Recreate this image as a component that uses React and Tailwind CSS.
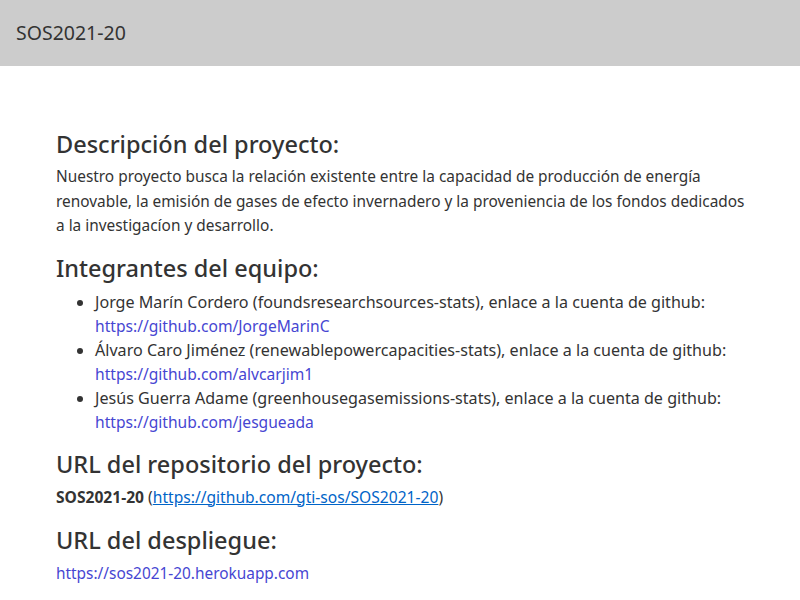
import React from 'react';

// Integrantes del equipo, con su microservicio y cuenta de github
const members = [
  { name: 'Jorge Marín Cordero', api: 'foundsresearchsources-stats', url: 'https://github.com/JorgeMarinC' },
  { name: 'Álvaro Caro Jiménez', api: 'renewablepowercapacities-stats', url: 'https://github.com/alvcarjim1' },
  { name: 'Jesús Guerra Adame', api: 'greenhousegasemissions-stats', url: 'https://github.com/jesgueada' },
];

export default function App() {
  return (
    <div className="min-h-screen bg-white text-[#333] font-['Noto_Sans','Open_Sans',sans-serif]">
      <header className="flex h-[66px] items-center bg-[#cccccc] px-4">
        <span className="text-[19.5px]">SOS2021-20</span>
      </header>

      <main className="px-[56px]">
        <h2 className="mt-[63px] text-[23.5px] leading-[30px] font-medium">Descripción del proyecto:</h2>
        <p className="mt-[6px] whitespace-nowrap text-[15.4px] leading-[24.5px]">
          Nuestro proyecto busca la relación existente entre la capacidad de producción de energía<br />
          renovable, la emisión de gases de efecto invernadero y la proveniencia de los fondos dedicados<br />
          a la investigacíon y desarrollo.
        </p>

        <h2 className="mt-[14px] text-[23.5px] leading-[30px] font-medium">Integrantes del equipo:</h2>
        <ul className="mt-[7px] list-disc whitespace-nowrap pl-[39px] text-[16.1px] leading-[24px]">
          {members.map((m) => (
            <li key={m.url}>
              {m.name} ({m.api}), enlace a la cuenta de github:<br />
              <a href={m.url} className="text-[15.6px] text-[#4646d2]">{m.url}</a>
            </li>
          ))}
        </ul>

        <h2 className="mt-[15px] text-[23.5px] leading-[30px] font-medium">URL del repositorio del proyecto:</h2>
        <p className="mt-[6px] text-[15.6px] leading-[24px]">
          <strong className="font-bold">SOS2021-20</strong> (
          <a href="https://github.com/gti-sos/SOS2021-20" className="text-[#0064c8] underline">https://github.com/gti-sos/SOS2021-20</a>)
        </p>

        <h2 className="mt-[16px] text-[23.5px] leading-[30px] font-medium">URL del despliegue:</h2>
        <p className="mt-[7px] text-[15.4px] leading-[24px]">
          <a href="https://sos2021-20.herokuapp.com" className="text-[#4646d2]">https://sos2021-20.herokuapp.com</a>
        </p>
      </main>
    </div>
  );
}
